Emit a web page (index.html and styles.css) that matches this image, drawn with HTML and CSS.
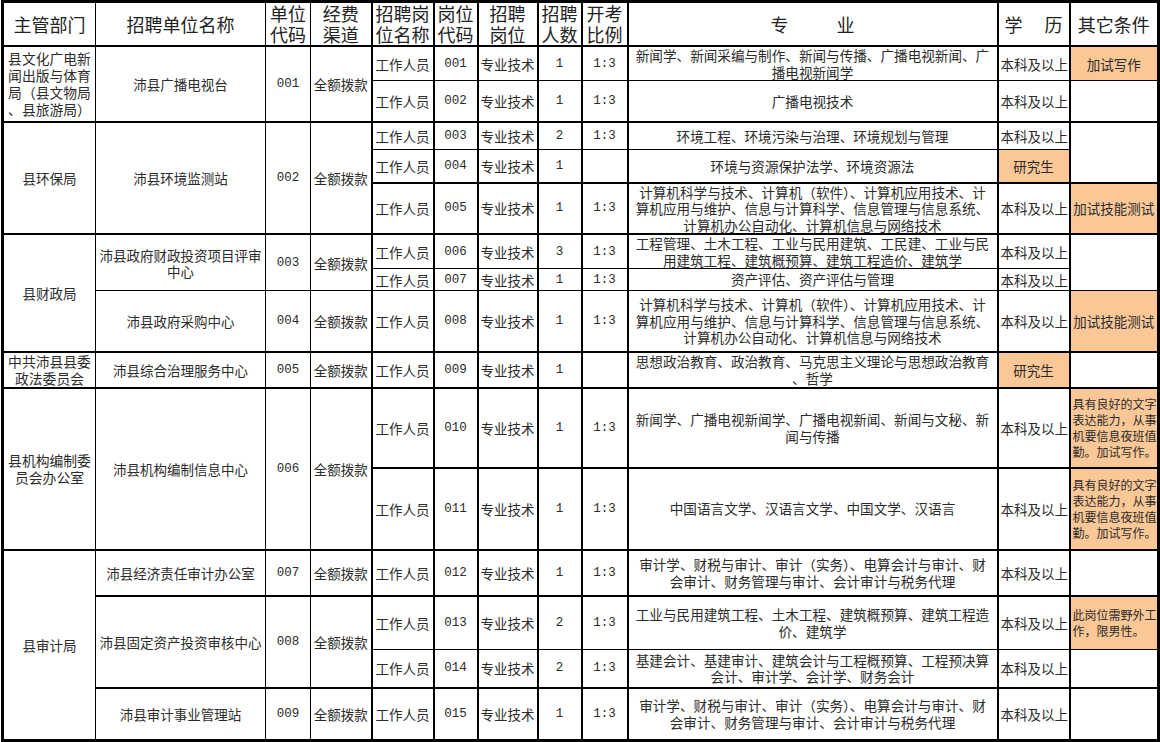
FILE: index.html
```html
<!DOCTYPE html>
<html lang="zh-CN">
<head>
<meta charset="utf-8">
<title>招聘岗位表</title>
<link rel="stylesheet" href="styles.css">
</head>
<body>
<table class="sheet">
<colgroup>
<col class="w0"><col class="w1"><col class="w2"><col class="w3">
<col class="w4 bl"><col class="w5 bl"><col class="w6 bl"><col class="w7 bl"><col class="w8 bl">
<col class="w9 bl"><col class="w10 bl"><col class="w11 bl">
</colgroup>
<thead>
<tr class="hd">
<th>主管部门</th><th>招聘单位名称</th><th>单位<br>代码</th><th>经费<br>渠道</th><th>招聘岗<br>位名称</th><th>岗位<br>代码</th><th>招聘<br>岗位</th><th>招聘<br>人数</th><th>开考<br>比例</th><th>专<span class="gap1"></span>业</th><th>学<span class="gap2"></span>历</th><th>其它条件</th>
</tr>
</thead>
<tbody>
<tr class="h33">
<td rowspan="2" class="dept">县文化广电新<br>闻出版与体育<br>局（县文物局<br>、县旅游局）</td>
<td rowspan="2">沛县广播电视台</td>
<td rowspan="2" class="n">001</td>
<td rowspan="2">全额拨款</td>
<td>工作人员</td><td class="n">001</td><td>专业技术</td><td class="n">1</td><td class="n">1:3</td>
<td class="m">新闻学、新闻采编与制作、新闻与传播、广播电视新闻、广<br>播电视新闻学</td>
<td class="e">本科及以上</td>
<td class="o">加试写作</td>
</tr>
<tr class="h41">
<td>工作人员</td><td class="n">002</td><td>专业技术</td><td class="n">1</td><td class="n">1:3</td>
<td class="m">广播电视技术</td>
<td class="e">本科及以上</td>
<td></td>
</tr>
<tr class="h28 k">
<td rowspan="3">县环保局</td>
<td rowspan="3">沛县环境监测站</td>
<td rowspan="3" class="n">002</td>
<td rowspan="3">全额拨款</td>
<td>工作人员</td><td class="n">003</td><td>专业技术</td><td class="n">2</td><td class="n">1:3</td>
<td class="m">环境工程、环境污染与治理、环境规划与管理</td>
<td class="e">本科及以上</td>
<td rowspan="2"></td>
</tr>
<tr class="h33">
<td>工作人员</td><td class="n">004</td><td>专业技术</td><td class="n">1</td><td></td>
<td class="m">环境与资源保护法学、环境资源法</td>
<td class="o">研究生</td>
</tr>
<tr class="h50 k">
<td>工作人员</td><td class="n">005</td><td>专业技术</td><td class="n">1</td><td class="n">1:3</td>
<td class="m">计算机科学与技术、计算机（软件）、计算机应用技术、计<br>算机应用与维护、信息与计算科学、信息管理与信息系统、<br>计算机办公自动化、计算机信息与网络技术</td>
<td class="e">本科及以上</td>
<td class="o">加试技能测试</td>
</tr>
<tr class="h34 k">
<td rowspan="3">县财政局</td>
<td rowspan="2">沛县政府财政投资项目评审<br>中心</td>
<td rowspan="2" class="n">003</td>
<td rowspan="2">全额拨款</td>
<td>工作人员</td><td class="n">006</td><td>专业技术</td><td class="n">3</td><td class="n">1:3</td>
<td class="m">工程管理、土木工程、工业与民用建筑、工民建、工业与民<br>用建筑工程、建筑概预算、建筑工程造价、建筑学</td>
<td class="e">本科及以上</td>
<td rowspan="2"></td>
</tr>
<tr class="h22">
<td>工作人员</td><td class="n">007</td><td>专业技术</td><td class="n">1</td><td class="n">1:3</td>
<td class="m">资产评估、资产评估与管理</td>
<td class="e">本科及以上</td>
</tr>
<tr class="h61">
<td>沛县政府采购中心</td>
<td class="n">004</td>
<td>全额拨款</td>
<td>工作人员</td><td class="n">008</td><td>专业技术</td><td class="n">1</td><td class="n">1:3</td>
<td class="m">计算机科学与技术、计算机（软件）、计算机应用技术、计<br>算机应用与维护、信息与计算科学、信息管理与信息系统、<br>计算机办公自动化、计算机信息与网络技术</td>
<td class="e">本科及以上</td>
<td class="o">加试技能测试</td>
</tr>
<tr class="h35 k">
<td class="dept">中共沛县县委<br>政法委员会</td>
<td>沛县综合治理服务中心</td>
<td class="n">005</td>
<td>全额拨款</td>
<td>工作人员</td><td class="n">009</td><td>专业技术</td><td class="n">1</td><td></td>
<td class="m">思想政治教育、政治教育、马克思主义理论与思想政治教育<br>、哲学</td>
<td class="o">研究生</td>
<td></td>
</tr>
<tr class="h80 k">
<td rowspan="2" class="dept">县机构编制委<br>员会办公室</td>
<td rowspan="2">沛县机构编制信息中心</td>
<td rowspan="2" class="n">006</td>
<td rowspan="2">全额拨款</td>
<td>工作人员</td><td class="n">010</td><td>专业技术</td><td class="n">1</td><td class="n">1:3</td>
<td class="m">新闻学、广播电视新闻学、广播电视新闻、新闻与文秘、新<br>闻与传播</td>
<td class="e">本科及以上</td>
<td class="o s">具有良好的文字<br>表达能力，从事<br>机要信息夜班值<br>勤。加试写作。</td>
</tr>
<tr class="h82 k">
<td>工作人员</td><td class="n">011</td><td>专业技术</td><td class="n">1</td><td class="n">1:3</td>
<td class="m">中国语言文学、汉语言文学、中国文学、汉语言</td>
<td class="e">本科及以上</td>
<td class="o s">具有良好的文字<br>表达能力，从事<br>机要信息夜班值<br>勤。加试写作。</td>
</tr>
<tr class="h46 k">
<td rowspan="4">县审计局</td>
<td>沛县经济责任审计办公室</td>
<td class="n">007</td>
<td>全额拨款</td>
<td>工作人员</td><td class="n">012</td><td>专业技术</td><td class="n">1</td><td class="n">1:3</td>
<td class="m">审计学、财税与审计、审计（实务）、电算会计与审计、财<br>会审计、财务管理与审计、会计审计与税务代理</td>
<td class="e">本科及以上</td>
<td></td>
</tr>
<tr class="h54 k">
<td rowspan="2">沛县固定资产投资审核中心</td>
<td rowspan="2" class="n">008</td>
<td rowspan="2">全额拨款</td>
<td>工作人员</td><td class="n">013</td><td>专业技术</td><td class="n">2</td><td class="n">1:3</td>
<td class="m">工业与民用建筑工程、土木工程、建筑概预算、建筑工程造<br>价、建筑学</td>
<td class="e">本科及以上</td>
<td class="o s">此岗位需野外工<br>作，限男性。</td>
</tr>
<tr class="h38">
<td>工作人员</td><td class="n">014</td><td>专业技术</td><td class="n">2</td><td class="n">1:3</td>
<td class="m">基建会计、基建审计、建筑会计与工程概预算、工程预决算<br>会计、审计学、会计学、财务会计</td>
<td class="e">本科及以上</td>
<td></td>
</tr>
<tr class="h53 k">
<td>沛县审计事业管理站</td>
<td class="n">009</td>
<td>全额拨款</td>
<td>工作人员</td><td class="n">015</td><td>专业技术</td><td class="n">1</td><td class="n">1:3</td>
<td class="m">审计学、财税与审计、审计（实务）、电算会计与审计、财<br>会审计、财务管理与审计、会计审计与税务代理</td>
<td class="e">本科及以上</td>
<td></td>
</tr>
</tbody>
</table>
</body>
</html>
```

FILE: styles.css
```css
html, body {
  margin: 0;
  padding: 0;
  background: #ffffff;
}

.sheet {
  border-collapse: collapse;
  table-layout: fixed;
  width: 1157px;
  margin: 0 0 0 1px;
  border: 3px solid #000;
  font-family: "Noto Sans CJK SC", "Noto Sans", sans-serif;
  font-size: 13.5px;
  color: #2b2b2b;
}

.w0 { width: 93px; }
.w1 { width: 170px; }
.w2 { width: 45px; }
.w3 { width: 61px; }
.w4 { width: 62px; }
.w5 { width: 44px; }
.w6 { width: 60px; }
.w7 { width: 44px; }
.w8 { width: 46px; }
.w9 { width: 370px; }
.w10 { width: 72px; }
.w11 { width: 89px; }

.bl { border-left: 2px solid #000; }

th, td {
  border: 1px solid #000;
  padding: 0 1px;
  text-align: center;
  vertical-align: middle;
  line-height: 16px;
  white-space: nowrap;
}

td { overflow: hidden; }

th {
  font-weight: normal;
  font-size: 18px;
  line-height: 21px;
  color: #222;
}

tr.hd { height: 43px; }
tr.hd th { border-bottom: 2px solid #000; }

tr.k > td { border-top: 2px solid #000; }

.gap1 { display: inline-block; width: 48px; }
.gap2 { display: inline-block; width: 22px; }

.dept { font-size: 13.8px; line-height: 17px; }

.n {
  font-family: "Liberation Mono", "DejaVu Sans Mono", monospace;
  font-size: 12.5px;
}

.m { font-size: 13.6px; line-height: 16.5px; }

.e { text-align: left; padding-left: 2px; }

.o { background: #fac796; }

.s {
  text-align: left;
  font-size: 12px;
  line-height: 16px;
  padding-left: 2px;
}

.h22 { height: 22px; }
.h28 { height: 28px; }
.h33 { height: 33px; }
.h34 { height: 34px; }
.h35 { height: 35px; }
.h38 { height: 38px; }
.h41 { height: 41px; }
.h46 { height: 46px; }
.h50 { height: 50px; }
.h53 { height: 53px; }
.h54 { height: 54px; }
.h61 { height: 61px; }
.h80 { height: 80px; }
.h82 { height: 82px; }
```
